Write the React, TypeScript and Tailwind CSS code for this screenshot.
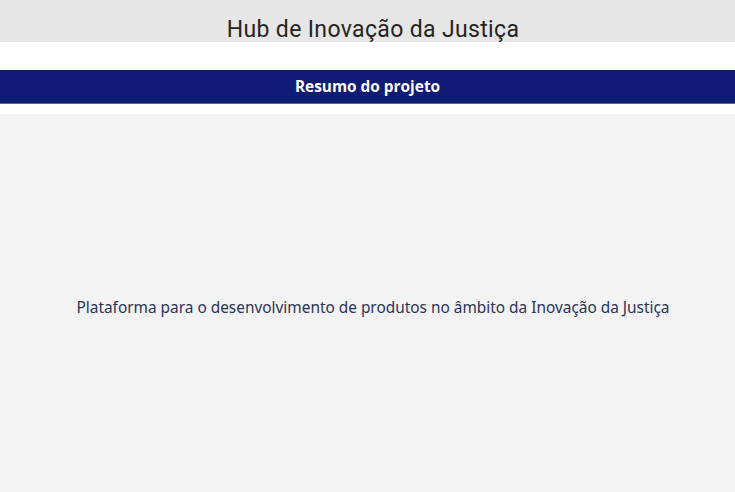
export default function App() {
  return (
    <div className="flex h-[492px] w-[735px] flex-col overflow-hidden bg-white">
      <header className="flex h-[42px] shrink-0 items-end justify-center bg-[#e6e6e6] pb-[1px] pl-[11px]">
        <h1 className="font-['Roboto',sans-serif] text-[23px] leading-none tracking-[0.35px] text-[#252423]">
          Hub de Inovação da Justiça
        </h1>
      </header>
      <div className="h-[28px] shrink-0" />
      <div className="flex h-[34px] shrink-0 items-center justify-center border-b border-[#5a6590] bg-[#0f1b74]">
        <span className="font-['Open_Sans',sans-serif] text-[15.4px] font-bold text-white">
          Resumo do projeto
        </span>
      </div>
      <div className="h-[10px] shrink-0" />
      <main className="flex flex-1 items-center justify-center bg-[#f3f3f3] pl-[11px] pt-[10px]">
        <p className="font-['Noto_Sans',sans-serif] text-[15.4px] text-[#2a3458]">
          Plataforma para o desenvolvimento de produtos no âmbito da Inovação da Justiça
        </p>
      </main>
    </div>
  );
}
